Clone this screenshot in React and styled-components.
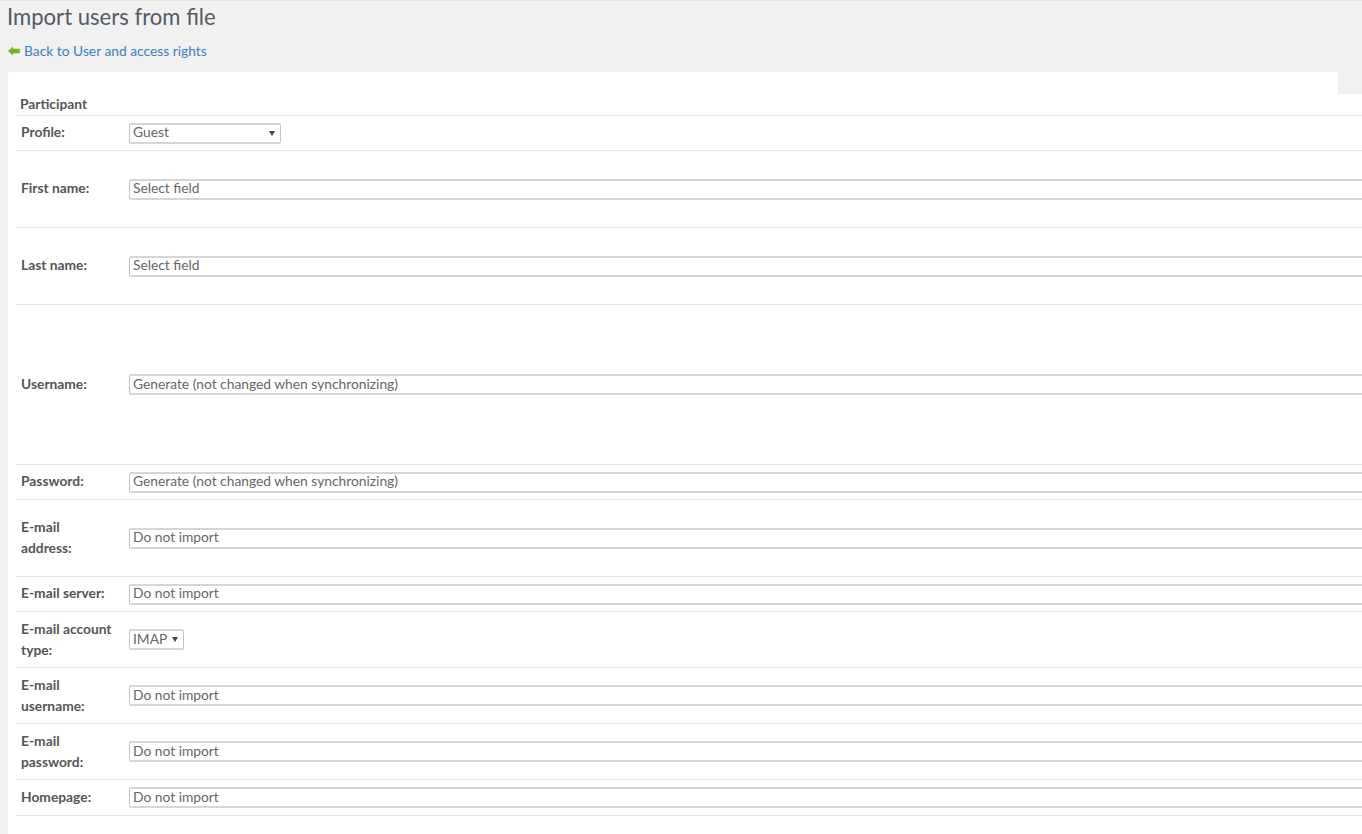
import React from 'react';
import styled, { createGlobalStyle } from 'styled-components';

const GlobalStyle = createGlobalStyle`
  html, body {
    margin: 0;
    padding: 0;
    overflow: hidden;
    height: 834px;
    background: #f1f1f1;
    font-family: Lato, "Open Sans", sans-serif;
    font-size: 13.8px;
    color: #555;
  }
`;

const Page = styled.div`
  width: 1362px;
  height: 834px;
  overflow: hidden;
  padding-top: 1px;
  box-sizing: border-box;
  border-top: 1px solid #e6e6e6;
`;

const Title = styled.h1`
  margin: 0;
  padding: 1px 0 0 7px;
  height: 30px;
  font-size: 22.1px;
  line-height: 27px;
  font-weight: 400;
  color: #555a66;
`;

const BackLink = styled.a`
  display: flex;
  align-items: center;
  gap: 4px;
  margin: 7px 0 0 8px;
  height: 20px;
  font-size: 13.8px;
  color: #3a80c0;
  text-decoration: none;
`;

const BackIcon = styled.svg`
  flex: none;
  margin-top: 2px;
`;

const PanelTop = styled.div`
  margin: 12px 0 0 8px;
  width: 1330px;
  height: 22px;
  background: #fff;
  border-radius: 3px 3px 0 0;
`;

const Sheet = styled.div`
  margin-left: 8px;
  height: 740px;
  padding-left: 8px;
  background: #fff;
`;

const Row = styled.div`
  display: flex;
  align-items: center;
  height: ${p => p.$h}px;
  border-bottom: 1px solid #e6e6e6;
`;

const Heading = styled.div`
  padding: 0 0 2px 4px;
  font-weight: 700;
  font-size: 13.8px;
  color: #555;
`;

const Label = styled.label`
  flex: none;
  width: 92px;
  margin-left: 5px;
  margin-right: 16px;
  margin-bottom: ${p => (p.$tight ? 0 : 1)}px;
  font-weight: 700;
  font-size: 13.8px;
  line-height: 20.7px;
  color: #555;
`;

const Select = styled.div`
  flex: none;
  display: flex;
  align-items: center;
  justify-content: space-between;
  box-sizing: border-box;
  width: ${p => p.$w || 1300}px;
  height: 21px;
  padding: 0 5px 3px 3px;
  background: #fff;
  border: 1px solid #c4c4c4;
  border-top-width: 2px;
  border-bottom-width: 2px;
  border-top-color: #d6d6d6;
  border-bottom-color: #d6d6d6;
  border-radius: 2px;
  font-size: 13.8px;
  color: #666;
`;

const Caret = styled.span`
  width: 0;
  height: 0;
  margin-top: 3px;
  margin-left: 4px;
  border-left: 3px solid transparent;
  border-right: 3px solid transparent;
  border-top: 5px solid #444;
`;

const rows = [
  { label: 'Profile:', value: 'Guest', h: 34, w: 152, caret: true },
  { label: 'First name:', value: 'Select field', h: 76 },
  { label: 'Last name:', value: 'Select field', h: 76 },
  { label: 'Username:', value: 'Generate (not changed when synchronizing)', h: 159 },
  { label: 'Password:', value: 'Generate (not changed when synchronizing)', h: 34 },
  { label: 'E-mail address:', value: 'Do not import', h: 76 },
  { label: 'E-mail server:', value: 'Do not import', h: 34 },
  { label: 'E-mail account type:', value: 'IMAP', h: 55, w: 55, caret: true },
  { label: 'E-mail username:', value: 'Do not import', h: 55 },
  { label: 'E-mail password:', value: 'Do not import', h: 55 },
  { label: 'Homepage:', value: 'Do not import', h: 35 },
];

const App = () => (
  <Page>
    <GlobalStyle />
    <Title>Import users from file</Title>
    <BackLink href="#">
      <BackIcon width="12" height="10" viewBox="0 0 12 10">
        <path d="M0 5 L5 0.5 V2.8 H11.8 V7.2 H5 V9.5 Z" fill="#6fb51f" />
      </BackIcon>
      Back to User and access rights
    </BackLink>
    <PanelTop />
    <Sheet>
      <Row $h={21}>
        <Heading>Participant</Heading>
      </Row>
      {rows.map(row => (
        <Row key={row.label} $h={row.h}>
          <Label $tight={row.h === 55}>{row.label}</Label>
          <Select $w={row.w}>
            {row.value}
            {row.caret && <Caret />}
          </Select>
        </Row>
      ))}
    </Sheet>
  </Page>
);

export default App;
